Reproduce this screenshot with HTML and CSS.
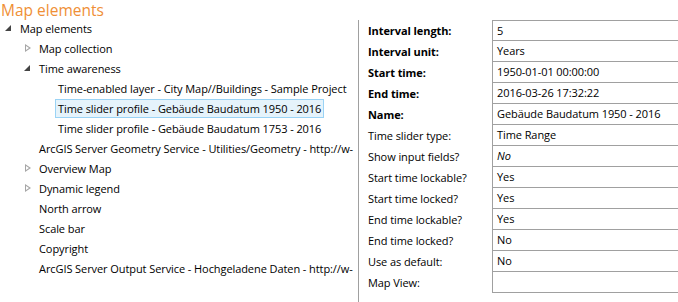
FILE: index.html
```html
<!DOCTYPE html>
<html lang="en">
<head>
  <meta charset="UTF-8">
  <title>Map elements</title>
  <link rel="stylesheet" href="styles.css">
</head>
<body>
  <div class="page">
    <div class="left">
      <div class="title">Map elements</div>
      <ul class="tree">
        <li class="item lvl0"><span class="exp open"></span>Map elements</li>
        <li class="item lvl1"><span class="exp closed"></span>Map collection</li>
        <li class="item lvl1"><span class="exp open"></span>Time awareness</li>
        <li class="item lvl2"><span class="exp"></span><span class="txt">Time-enabled layer - City Map//Buildings - Sample Project</span></li>
        <li class="item lvl2"><span class="exp"></span><span class="txt selected">Time slider profile - Gebäude Baudatum 1950 - 2016</span></li>
        <li class="item lvl2"><span class="exp"></span><span class="txt">Time slider profile - Gebäude Baudatum 1753 - 2016</span></li>
        <li class="item lvl1"><span class="exp"></span>ArcGIS Server Geometry Service - Utilities/Geometry - http://w-</li>
        <li class="item lvl1"><span class="exp closed"></span>Overview Map</li>
        <li class="item lvl1"><span class="exp closed"></span>Dynamic legend</li>
        <li class="item lvl1"><span class="exp"></span>North arrow</li>
        <li class="item lvl1"><span class="exp"></span>Scale bar</li>
        <li class="item lvl1"><span class="exp"></span>Copyright</li>
        <li class="item lvl1"><span class="exp"></span>ArcGIS Server Output Service - Hochgeladene Daten - http://w-</li>
      </ul>
    </div>
    <div class="props">
      <div class="label bold">Interval length:</div><div class="value first">5</div>
      <div class="label bold">Interval unit:</div><div class="value">Years</div>
      <div class="label bold">Start time:</div><div class="value">1950-01-01 00:00:00</div>
      <div class="label bold">End time:</div><div class="value">2016-03-26 17:32:22</div>
      <div class="label bold">Name:</div><div class="value">Gebäude Baudatum 1950 - 2016</div>
      <div class="label">Time slider type:</div><div class="value">Time Range</div>
      <div class="label">Show input fields?</div><div class="value italic">No</div>
      <div class="label">Start time lockable?</div><div class="value">Yes</div>
      <div class="label">Start time locked?</div><div class="value">Yes</div>
      <div class="label">End time lockable?</div><div class="value">Yes</div>
      <div class="label">End time locked?</div><div class="value">No</div>
      <div class="label">Use as default:</div><div class="value">No</div>
      <div class="label">Map View:</div><div class="value"></div>
    </div>
  </div>
</body>
</html>
```

FILE: styles.css
```css
body {
  margin: 0;
  font-family: 'Open Sans', sans-serif;
  font-size: 11px;
  letter-spacing: -0.08px;
  color: #000;
  background: #fff;
}

.page {
  display: flex;
  width: 678px;
  height: 302px;
  overflow: hidden;
}

.left {
  width: 358px;
  flex: none;
  overflow: hidden;
}

.title {
  height: 18px;
  line-height: 18px;
  padding-top: 1px;
  margin-bottom: -1px;
  padding-left: 1px;
  font-size: 15.5px;
  letter-spacing: 0;
  color: #ef8f36;
  white-space: nowrap;
}

.tree {
  list-style: none;
  margin: 0;
  padding: 0;
}

.item {
  display: flex;
  align-items: center;
  height: 20px;
  white-space: nowrap;
}

.lvl0 { padding-left: 0; }
.lvl1 { padding-left: 19px; }
.lvl2 { padding-left: 38px; }

.exp {
  width: 20px;
  height: 20px;
  flex: none;
  position: relative;
}

/* collapsed: hollow triangle pointing right */
.exp.closed::before {
  content: '';
  position: absolute;
  left: 6px;
  top: 6px;
  border-left: 6px solid #a6a6a6;
  border-top: 4.5px solid transparent;
  border-bottom: 4.5px solid transparent;
}
.exp.closed::after {
  content: '';
  position: absolute;
  left: 7px;
  top: 8px;
  border-left: 3px solid #fff;
  border-top: 2.5px solid transparent;
  border-bottom: 2.5px solid transparent;
}

/* expanded: filled triangle pointing down-right */
.exp.open::before {
  content: '';
  position: absolute;
  left: 5px;
  top: 7px;
  border-bottom: 6px solid #444;
  border-left: 6px solid transparent;
}

.txt {
  padding: 1px 2px;
  margin-left: -3px;
  border: 1px solid transparent;
}

.txt.selected {
  background: #e5f3fb;
  border-color: #9ad3f5;
}

.props {
  flex: 1;
  margin-top: 20px;
  border-left: 1px solid #a0a0a0;
  padding-left: 9px;
  display: grid;
  grid-template-columns: 124px 1fr;
  grid-auto-rows: 21px;
  align-content: start;
}

.label {
  line-height: 22px;
  white-space: nowrap;
}

.bold {
  font-weight: bold;
}

.value {
  border-left: 1px solid #a0a0a0;
  border-bottom: 1px solid #a0a0a0;
  padding-left: 4px;
  line-height: 20px;
  white-space: nowrap;
}

.value.first {
  border-top: 1px solid #a0a0a0;
  line-height: 19px;
}

.italic {
  font-style: italic;
}
```
